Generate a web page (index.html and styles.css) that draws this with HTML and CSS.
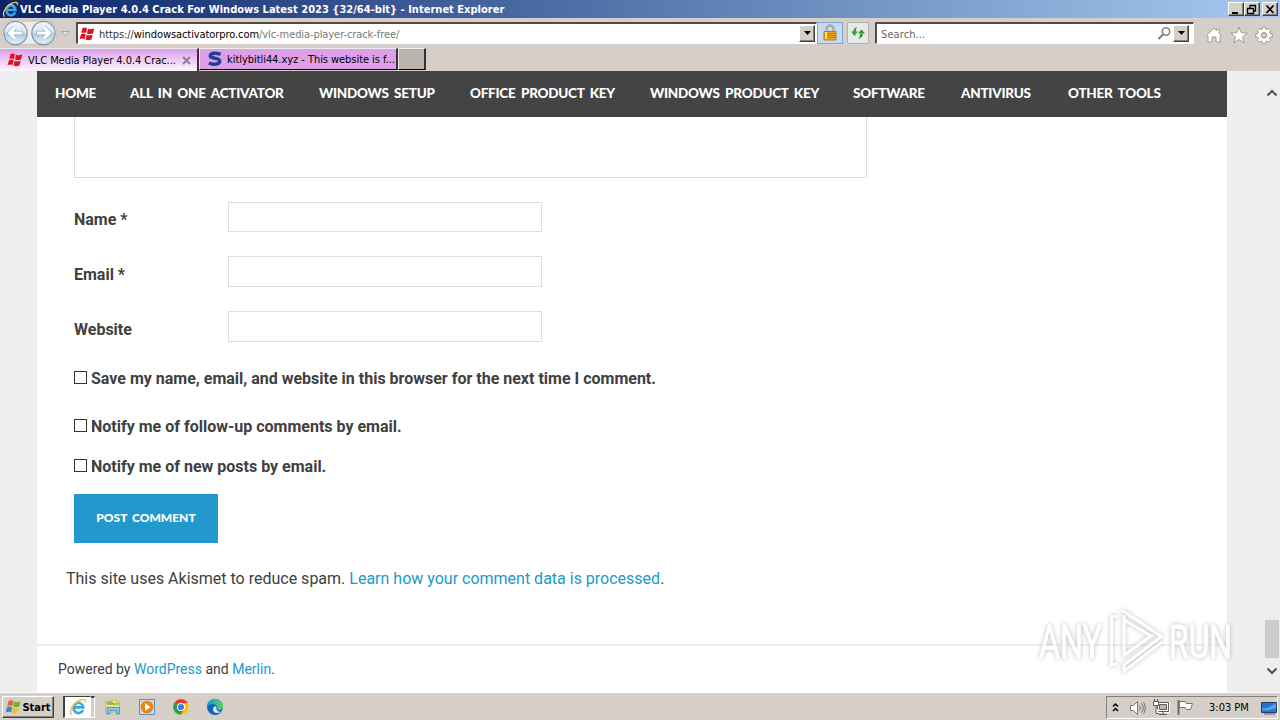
FILE: index.html
```html
<!DOCTYPE html>
<html lang="en">

<head>
    <meta charset="UTF-8">
    <meta name="viewport" content="width=device-width, initial-scale=1.0">
    <title>VLC Media Player 4.0.4 Crack For Windows Latest 2023 {32/64-bit}</title>
    <link rel="stylesheet" href="styles.css">
</head>

<body>
    <!-- shared icons -->
    <svg class="defs" width="0" height="0">
        <symbol id="ie" viewBox="0 0 16 16">
            <path d="M12.4 10.600A4.300 4.600 0 1 1 12.700 8.400H5" fill="none" stroke="#3ba6e6" stroke-width="2.400" />
            <path d="M4.500 5A5 5 0 0 1 12 5" fill="none" stroke="#9fdcfa" stroke-width=".8" />
            <path d="M2.600 14.600C-.5 12.500 3 5 9 2.200c4-1.700 6.300-1 5.400 1.800" fill="none" stroke="#f0c03c" stroke-width="1.300" />
        </symbol>
        <symbol id="winlogo" viewBox="0 0 16 16">
            <path d="M3.500 2.200Q6 .8 8 2.200L7 7Q5 5.800 2.300 7zM9 2.700Q11.500 4 15.300 2.500L14 7.400Q10.500 8.600 8 7.400zM2 8.200Q4.800 7 6.700 8.300L5.600 13.200Q3.400 12 .5 13.200zM7.700 8.700Q10.200 10 13.700 8.700L12.400 13.600Q9 15 6.600 13.600z" />
        </symbol>
    </svg>

    <div class="screen">
        <div class="titlebar">
            <svg class="title-icon" width="17" height="17"><use href="#ie" /></svg>
            <span class="title">VLC Media Player 4.0.4 Crack For Windows Latest 2023 {32/64-bit} - Internet Explorer</span>
            <div class="window-buttons">
                <button class="bevel"><svg width="12" height="11"><path d="M2 9h6" stroke="#000" stroke-width="2" /></svg></button>
                <button class="bevel"><svg width="12" height="11"><path d="M4 1.500h6M4 1v4M9.500 1v6H8M1 4.500h7M1.500 4v5.500h6V4" fill="none" stroke="#000" stroke-width="1.300" /></svg></button>
                <button class="bevel close"><svg width="12" height="11"><path d="M2.500 1.500l7 7.500M9.500 1.500l-7 7.500" stroke="#000" stroke-width="1.700" /></svg></button>
            </div>
        </div>

        <div class="toolbar">
            <svg class="nav-arrows" width="72" height="28">
                <defs>
                    <linearGradient id="ball" x2="0" y2="1">
                        <stop offset="0" stop-color="#f4f8fb" />
                        <stop offset=".45" stop-color="#dce7f0" />
                        <stop offset=".55" stop-color="#b2cadd" />
                        <stop offset="1" stop-color="#e2f7ff" />
                    </linearGradient>
                </defs>
                <path d="M15 1q14 3 29 0a13 13 0 0 1 0 26q-14-4-29 0A13 13 0 0 1 15 1z" fill="#efeeec" stroke="#bbb7b2" stroke-width=".7" />
                <circle cx="15.500" cy="14" r="11.700" fill="url(#ball)" stroke="#8195a6" stroke-width="1.200" />
                <circle cx="43.500" cy="14" r="11.700" fill="url(#ball)" stroke="#8195a6" stroke-width="1.200" />
                <path d="M22.500 14H9.500M15 8.500L9.500 14l5.500 5.500" fill="none" stroke="#8ba4b8" stroke-width="4.400" />
                <path d="M22 14H10M15 8.500L9.500 14l5.500 5.500" fill="none" stroke="#fff" stroke-width="3.200" />
                <path d="M36.500 14h13M44 8.500l5.500 5.500-5.500 5.500" fill="none" stroke="#8ba4b8" stroke-width="4.400" />
                <path d="M37 14h12M44 8.500l5.500 5.500-5.500 5.500" fill="none" stroke="#fff" stroke-width="3.200" />
                <path d="M61.500 12.500h8l-4 4.500z" fill="#e8e5e0" stroke="#aaa7a0" />
            </svg>
            <div class="field address">
                <svg class="favicon" width="16" height="16" fill="#e01020"><use href="#winlogo" /></svg>
                <span class="url"><i>https://</i>windowsactivatorpro.com<em>/vlc-media-player-crack-free/</em></span>
                <button class="bevel drop"><svg width="9" height="5"><path d="M1 0h7L4.500 4z" /></svg></button>
            </div>
            <div class="lock">
                <svg width="16" height="18">
                    <path d="M4.500 8V5a3.500 3.500 0 0 1 7 0v3" fill="none" stroke="#8d8460" stroke-width="2" />
                    <path d="M4.500 8V5a3.500 3.500 0 0 1 7 0v3" fill="none" stroke="#e3ddb8" stroke-width=".7" />
                    <path d="M2 7.500h12v8.500h-12z" fill="#eda91e" stroke="#b97d12" />
                    <path d="M2 9.500h12M2 11.500h12M2 13.500h12" stroke="#b97c15" />
                    <path d="M4 8v7" stroke="#ffe275" stroke-width="2" />
                </svg>
            </div>
            <div class="refresh">
                <svg width="18" height="18">
                    <path d="M2 7.500h7L5.500 12zM4 8q0-4 4-5-1.500 2-1 5z" fill="#35a83c" />
                    <path d="M9 9.500h7L12.500 5.500zM11 9h3q0 5-5 6 2.500-2 2-6z" fill="#279434" />
                </svg>
            </div>
            <div class="field search">
                <span>Search...</span>
                <svg width="15" height="15"><circle cx="9" cy="5.500" r="3.700" fill="none" stroke="#828282" stroke-width="1.600" /><path d="M6.500 8L1.500 13" stroke="#828282" stroke-width="2.200" /></svg>
                <button class="bevel drop"><svg width="9" height="5"><path d="M1 0h7L4.500 4z" /></svg></button>
            </div>
            <div class="tools">
                <svg width="18" height="18"><path d="M1.500 9.500L9 2l2.500 2.500V3h2.500v4l2.500 2.500-1.500.8V16h-4v-5H7v5H3v-5.700z" fill="#fff" stroke="#a09d98" /></svg>
                <svg width="18" height="18"><path d="M9 1l2.200 5.700 6 .3-4.700 3.900 1.600 6L9 13.500l-5.100 3.400 1.600-6L.8 7l6-.3z" fill="#fff" stroke="#a09d98" /></svg>
                <svg width="18" height="18">
                    <path d="M7.600 1h2.800l.4 2.200 1.200.5 1.900-1.300 2 2-1.300 1.900.5 1.200 2.200.4v2.800l-2.200.4-.5 1.200 1.300 1.900-2 2-1.900-1.300-1.200.5-.4 2.200H7.600l-.4-2.200-1.200-.5-1.900 1.300-2-2 1.300-1.900-.5-1.200-2.200-.4V7.900l2.200-.4.500-1.200-1.300-1.900 2-2L6 3.700l1.200-.5z" fill="#fff" stroke="#a09d98" />
                    <circle cx="9" cy="9.300" r="2.700" fill="#d4d0c8" stroke="#918e8a" />
                </svg>
            </div>
        </div>

        <div class="tabs">
            <div class="tab active">
                <svg width="16" height="16" fill="#e01020"><use href="#winlogo" /></svg>
                <span>VLC Media Player 4.0.4 Crac...</span>
                <svg class="tab-close" width="9" height="9"><path d="M1 1l7 7M8 1L1 8" stroke="#8c8190" stroke-width="2" /></svg>
            </div>
            <div class="tab">
                <svg width="16" height="16"><path d="M13.500 3.500Q11 2 7.500 2.200 3 2.500 3.200 5c.2 2.600 9.600 1.600 9.600 5 0 3.500-7 4-10.800 2" fill="none" stroke="#1c3f94" stroke-width="3.400" /></svg>
                <span class="second">kitlybitli44.xyz - This website is f...</span>
            </div>
            <div class="new-tab"></div>
        </div>

        <div class="viewport">
            <div class="page">
                <nav class="main-nav">
                    <a class="n1">HOME</a>
                    <a class="n2">ALL IN ONE ACTIVATOR</a>
                    <a class="n3">WINDOWS SETUP</a>
                    <a class="n4">OFFICE PRODUCT KEY</a>
                    <a class="n5">WINDOWS PRODUCT KEY</a>
                    <a class="n6">SOFTWARE</a>
                    <a class="n7">ANTIVIRUS</a>
                    <a class="n8">OTHER TOOLS</a>
                </nav>
                <form class="comment-form">
                    <div class="comment-box"></div>
                    <div class="row first"><label>Name *</label><input type="text"></div>
                    <div class="row"><label>Email *</label><input type="text"></div>
                    <div class="row"><label>Website</label><input type="text"></div>
                    <div class="check save"><span class="box"></span><label>Save my name, email, and website in this browser for the next time I comment.</label></div>
                    <div class="check follow"><span class="box"></span><label>Notify me of follow-up comments by email.</label></div>
                    <div class="check"><span class="box"></span><label>Notify me of new posts by email.</label></div>
                    <button type="button" class="submit"><span>POST COMMENT</span></button>
                </form>
                <p class="akismet">This site uses Akismet to reduce spam. <a>Learn how your comment data is processed</a>.</p>
                <footer>Powered by <a>WordPress</a> and <a>Merlin</a>.</footer>
            </div>
            <div class="scrollbar">
                <svg class="up" width="12" height="8"><path d="M1.500 6.500L6 2l4.500 4.500" fill="none" stroke="#505050" stroke-width="2" /></svg>
                <div class="thumb"></div>
                <svg class="down" width="12" height="8"><path d="M1.500 1.500L6 6l4.500-4.500" fill="none" stroke="#505050" stroke-width="2" /></svg>
            </div>
        </div>

        <div class="taskbar">
            <button class="bevel start">
                <svg width="17" height="16" viewBox="0 0 17 16">
                    <path d="M3.500 2Q6 .6 8.500 2L7.500 7Q5 5.800 2.300 7z" fill="#e8642a" />
                    <path d="M9.200 2.600Q12 4 15.500 2.300L14 7.400Q11 8.800 8.200 7.400z" fill="#65b32e" />
                    <path d="M2 8.200Q4.800 7 7.200 8.300L6.100 13.400Q3.400 12 .7 13.400z" fill="#3c82d6" />
                    <path d="M7.900 8.700Q10.600 10 13.700 8.700L12.300 13.800Q9.500 15.200 6.800 13.800z" fill="#f5bd26" />
                </svg>
                <span>Start</span>
            </button>
            <div class="task-ie"><svg width="18" height="18"><use href="#ie" /></svg></div>
            <div class="task-stack"></div>
            <div class="quick">
                <svg width="18" height="18">
                    <path d="M1.500 3.500h5l1-1.500h5v2h3v10h-14z" fill="#f6dc83" stroke="#d6b757" />
                    <path d="M3 6h12M3 4.500h6" stroke="#7dbc63" stroke-width="1.500" />
                    <path d="M3 16V9.500h12.500V16h-3v-3.500H6V16z" fill="#84c8e8" stroke="#4b9ac8" />
                </svg>
                <svg width="18" height="18">
                    <path d="M1.500 1.500h15v15h-15z" fill="#c7dbed" stroke="#5a91c9" />
                    <circle cx="9" cy="9" r="6.300" fill="#f2820f" />
                    <path d="M7 5l5.500 4L7 13z" fill="#fff" />
                </svg>
                <svg width="18" height="18">
                    <circle cx="9" cy="9" r="7.800" fill="#fbc116" />
                    <path d="M9 9L2.200 5.100A7.800 7.800 0 0 1 15.800 5.200H9z" fill="#e33b2e" />
                    <path d="M9 9L2.200 5.100A7.800 7.800 0 0 0 8.500 16.800L12.400 11z" fill="#2da04d" />
                    <circle cx="9" cy="9" r="4" fill="#fff" />
                    <circle cx="9" cy="9" r="3.100" fill="#3b7ded" />
                </svg>
                <svg width="18" height="18">
                    <defs>
                        <linearGradient id="edge"><stop offset="0" stop-color="#159bd7" /><stop offset="1" stop-color="#5ad05c" /></linearGradient>
                    </defs>
                    <circle cx="9" cy="9" r="8" fill="#0f65b8" />
                    <path d="M1 9a8 8 0 0 1 16-.5c0 3-2.500 4-5.500 3.200-1.500-.5.700-1.600-.7-3.700C9 5.300 3.500 5 1 9z" fill="url(#edge)" />
                    <path d="M10.500 11.500c-.8-.8.700-1.600-.5-3.300-1.800 0-3.300 1.600-3 3.800.5 3 4.500 4 8.500 1.800-2 .5-4-.6-5-2.300z" fill="#d7e6ee" />
                </svg>
            </div>
            <div class="tray">
                <svg width="7" height="11"><path d="M1 4.500L3.500 2 6 4.500M1 9l2.500-2.500L6 9" fill="none" stroke="#000" stroke-width="1.500" /></svg>
                <svg class="volume" width="17" height="16">
                    <path d="M1.500 5.500h3l4-4v13l-4-4h-3z" fill="#fff" stroke="#77736e" />
                    <path d="M10.500 5.500q2 2.500 0 5M12.500 3.500q3.500 4.500 0 9M14.500 2q3.500 6 0 12" fill="none" stroke="#77736e" />
                </svg>
                <svg class="network" width="18" height="17">
                    <path d="M5.500 4.500h10v8h-10z" fill="#b9b6b1" stroke="#fff" stroke-width="3" />
                    <path d="M4.500 3.500h11v9h-11zM10 13v2.500M6 15.500h8" fill="none" stroke="#5f5c59" />
                    <path d="M6.500 5.500h7v5h-7z" fill="#b9b6b1" stroke="#5f5c59" />
                    <path d="M.5 2.500h5v4h-5zM1.500 0v3M4.500 0v3M3 6.500v8h3" fill="#fff" stroke="#5f5c59" />
                </svg>
                <svg class="flag" width="18" height="17"><path d="M2.500 1v15" stroke="#716d69" stroke-width="2" /><path d="M3.500 2.500h6l1 2h6l-2 6h-4l-1-2h-6z" fill="#fff" stroke="#77736e" /></svg>
                <span class="clock">3:03 PM</span>
                <svg class="desktop" width="16" height="14"><path d="M.5 1.500h15v10H.5z" fill="#2875d0" stroke="#203b70" /><path d="M1 7Q7 8 15 2v5Q8 10 1 9z" fill="#5aa2e8" /><path d="M3 13h11" stroke="#525b6c" /></svg>
            </div>
        </div>

        <svg class="watermark" width="240" height="76">
            <g class="wm-shape">
                <text x="5" y="54" textLength="63" lengthAdjust="spacingAndGlyphs">ANY</text>
                <text x="135" y="54" textLength="63" lengthAdjust="spacingAndGlyphs">RUN</text>
                <path d="M83.500 12.500h-6V61l6-1.500" />
                <path d="M87.500 6l40 26.500L90 61v6l38-29M90 11v40l27-19-27-16" />
            </g>
        </svg>
    </div>
</body>

</html>
```
FILE: styles.css
```css
* {
    box-sizing: border-box;
}

body {
    margin: 0;
    overflow: hidden;
    font-family: Roboto, "Liberation Sans", sans-serif;
}

button {
    margin: 0;
    padding: 0;
    border-radius: 0;
}

svg {
    display: block;
    flex: none;
}

.defs {
    position: absolute;
}

.screen {
    position: relative;
    width: 1280px;
    height: 720px;
    display: flex;
    flex-direction: column;
    background: #d4d0c8;
    overflow: hidden;
}

.bevel {
    display: flex;
    align-items: center;
    justify-content: center;
    background: #d4d0c8;
    border: 1px solid;
    border-color: #fff #404040 #404040 #fff;
    box-shadow: inset -1px -1px #808080;
}

/* title bar */
.titlebar {
    display: flex;
    align-items: center;
    height: 18px;
    padding: 0 2px;
    background: linear-gradient(to right, #0a246a, #a6caf0);
}

.title {
    flex: 1;
    margin-left: 1px;
    color: #fff;
    font: bold 11px "DejaVu Sans Condensed", "DejaVu Sans", sans-serif;
    font-stretch: condensed;
    letter-spacing: 0.020px;
    white-space: nowrap;
}

.window-buttons {
    display: flex;
}

.window-buttons .bevel {
    width: 16px;
    height: 14px;
}

.window-buttons .close {
    margin-left: 2px;
}

/* address row */
.toolbar {
    display: flex;
    align-items: center;
    height: 30px;
    padding: 0 7px 0 0;
    background: #d6cfc9;
    font: 11px "DejaVu Sans Condensed", "DejaVu Sans", sans-serif;
    font-stretch: condensed;
}

.nav-arrows {
    margin-right: 4px;
}

.field {
    display: flex;
    align-items: center;
    height: 22px;
    background: #fff;
    border: 1px solid #fff;
    border-top: 2px solid #514b48;
    border-left: 2px solid #514b48;
}

.address {
    width: 741px;
    padding: 0 1px 0 1px;
}

.url {
    flex: 1;
    margin-left: 4px;
    padding-top: 1px;
    letter-spacing: -0.080px;
    white-space: nowrap;
}

.url i,
.url em {
    font-style: normal;
}

.url i {
    color: #333;
}

.url em {
    color: #777;
}

.drop {
    width: 16px;
    height: 17px;
}

.lock {
    display: flex;
    align-items: center;
    justify-content: center;
    width: 26px;
    height: 22px;
    background: #c5daf6;
    border: 1px solid #7da7dc;
}

.refresh {
    display: flex;
    align-items: center;
    justify-content: center;
    width: 22px;
    height: 22px;
    margin: 0 6px 0 4px;
    background: #e5eae8;
    border: 1px solid #b0b0ae;
    border-radius: 2px;
}

.search {
    width: 319px;
    padding: 0 4px;
    color: #666;
}

.search span {
    flex: 1;
    padding-top: 1px;
    letter-spacing: 0.1px;
}

.search svg {
    margin-right: 1px;
}

.search .drop svg {
    margin: 0;
}

.tools {
    display: flex;
    gap: 7px;
    margin-left: auto;
    padding-top: 3px;
}

/* tabs */
.tabs {
    display: flex;
    height: 23px;
    background: #d6cfc9;
    font: 11px "DejaVu Sans Condensed", "DejaVu Sans", sans-serif;
    font-stretch: condensed;
}

.tab {
    display: flex;
    align-items: center;
    width: 199px;
    height: 22px;
    padding-left: 6px;
    background: #dc9fe8;
    border-top: 1px solid #eee;
    border-right: 2px solid #393036;
    border-bottom: 1px solid #000;
    white-space: nowrap;
}

.tab + .tab {
    padding-left: 7px;
    border-left: 1px solid #eee;
}

.tab.active {
    height: 23px;
    padding-left: 7px;
    background: linear-gradient(#dc9fe8, #fff5ff);
    border-bottom: 0;
}

.tab span {
    flex: 1;
    margin-left: 5px;
    letter-spacing: -0.050px;
}

.tab .second {
    margin-left: 4px;
}

.tab-close {
    margin-right: 6px;
}

.new-tab {
    width: 28px;
    height: 22px;
    background: #bab3ac;
    border: 1px solid #eee;
    border-right: 2px solid #393036;
    border-bottom: 1px solid #000;
}

/* web page */
.viewport {
    display: flex;
    height: 621px;
    padding-left: 37px;
    background: #eee;
}

.page {
    display: flex;
    flex-direction: column;
    width: 1190px;
    background: #fff;
    color: #404040;
}

.page a {
    color: #2299cc;
}

.main-nav {
    display: flex;
    align-items: center;
    height: 46px;
    padding: 0 18px 3px;
    background: #444;
    font: 900 13.500px Lato, sans-serif;
    letter-spacing: -0.250px;
    word-spacing: 2.500px;
    white-space: nowrap;
}

.page .main-nav a {
    color: #fff;
    flex: none;
}

.n1 { width: 75px; }
.n2 { width: 189px; }
.n3 { width: 151px; }
.n4 { width: 180px; }
.n5 { width: 203px; }
.n6 { width: 108px; }
.n7 { width: 107px; }

.comment-form {
    display: flex;
    flex-direction: column;
    align-items: flex-start;
    padding-left: 37px;
    font-size: 16px;
    font-weight: bold;
}

.comment-box {
    width: 793px;
    height: 61px;
    margin-bottom: 24px;
    border: 1px solid #ddd;
    border-top: 0;
}

.row {
    display: flex;
    height: 31px;
    margin-bottom: 24px;
}

.row label {
    width: 154px;
    padding-top: 8px;
    line-height: 21px;
}

.row input {
    width: 314px;
    height: 31px;
    border: 1px solid #ddd;
}

.row.first,
.row.first input {
    height: 30px;
}

.row.first label {
    padding-top: 7px;
}

.check {
    display: flex;
    align-items: center;
    height: 20px;
    margin-bottom: 20px;
    white-space: nowrap;
}

.check.save {
    margin: 2px 0 28px;
}

.check .box {
    width: 13px;
    height: 13px;
    margin: 0 4px 1px 0;
    border: 1px solid #333;
}

.submit {
    width: 144px;
    height: 49px;
    margin-top: -2px;
    padding-bottom: 2px;
    border: 0;
    background: #2299cc;
    color: #fff;
    font: 900 12px Lato, sans-serif;
    word-spacing: 2px;
}

.akismet {
    margin: 26px 0 0 29px;
    font-size: 16px;
    line-height: 20px;
}

footer {
    margin-top: auto;
    height: 48px;
    padding-left: 21px;
    border-top: 2px solid #eee;
    font-size: 14px;
    line-height: 46px;
}

.scrollbar {
    display: flex;
    flex-direction: column;
    align-items: center;
    width: 16px;
    margin-left: auto;
    padding-top: 18px;
}

.thumb {
    width: 14px;
    height: 38px;
    margin: 523px 0 9px;
    background: #cdcdcd;
}

/* taskbar */
.taskbar {
    display: flex;
    height: 28px;
    padding: 3px 2px 1px;
    border-top: 1px solid #fff;
    background: #d6cfc7;
}

.start {
    width: 52px;
    height: 22px;
    font: bold 11px "DejaVu Sans Condensed", "DejaVu Sans", sans-serif;
    font-stretch: condensed;
}

.task-ie {
    display: flex;
    align-items: center;
    justify-content: center;
    width: 28px;
    height: 22px;
    margin-left: 9px;
    background: #fff;
    border: 1px solid #fff;
    border-top-color: #404040;
    border-left: 2px solid #404040;
}

.task-stack {
    width: 4px;
    height: 22px;
    border: 1px solid #fff;
    border-top: 2px solid #404040;
    border-left: 0;
}

.quick {
    display: flex;
    align-items: center;
    gap: 16px;
    height: 22px;
    margin-left: 9px;
}

.tray {
    display: flex;
    align-items: center;
    width: 172px;
    height: 23px;
    margin-left: auto;
    padding-left: 5px;
    border: 1px solid #fff;
    border-top-color: #808080;
    border-left-color: #808080;
}

.volume {
    margin-left: 10px;
}

.network {
    margin-left: 7px;
}

.flag {
    margin-left: 5px;
}

.clock {
    margin-left: 15px;
    font: 11px "DejaVu Sans Condensed", "DejaVu Sans", sans-serif;
    font-stretch: condensed;
    white-space: nowrap;
}

.desktop {
    margin-left: auto;
}

/* watermark floats over the page */
.watermark {
    position: absolute;
    left: 1034px;
    top: 604px;
    overflow: visible;
    opacity: 0.8;
}

.wm-shape {
    fill: none;
    stroke: #fff;
    stroke-width: 3px;
    filter: drop-shadow(0 0 2px #aaa);
}

.wm-shape text {
    font: 47px Roboto, sans-serif;
    fill: #fff;
    stroke: #fff;
    stroke-width: 1px;
}
```
